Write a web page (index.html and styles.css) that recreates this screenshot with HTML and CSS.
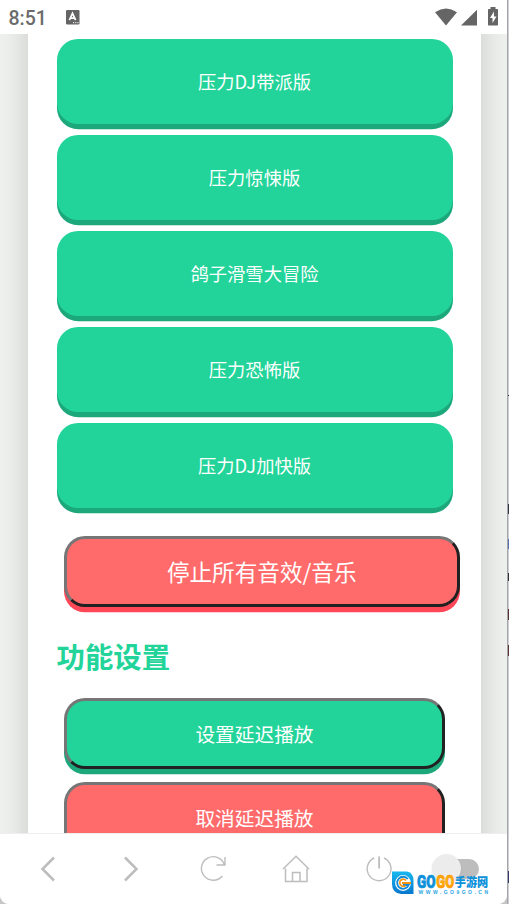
FILE: index.html
```html
<!DOCTYPE html>
<html lang="zh-CN">
<head>
<meta charset="utf-8">
<meta name="viewport" content="width=device-width, initial-scale=1">
<title>音效</title>
<link rel="stylesheet" href="styles.css">
</head>
<body>
<div class="desktop">
  <div class="phone">
    <header class="status">
      <span class="clock">8:51</span>
      <svg class="ime" viewBox="0 0 14 15"><rect width="13.5" height="14.5" rx="1.2" fill="#656565"/><path d="M3.4 10.2 6.5 3.3 9.6 10.2M4.6 8.1h3.8" fill="none" stroke="#fff" stroke-width="1.7"/><path d="M7 12.7h1.2M9.2 12.7h1.2M11.4 12.7h1.2" stroke="#fff"/></svg>
      <svg class="signals" viewBox="0 0 64 20"><path d="M0 5.2Q11 -2 22 5.2L11 18.5Z" fill="#656565"/><path d="M42 2.7V18.5H26Z" fill="#656565"/><path d="M55.5 0h5v2h1.700q.8 0 .8.8v14.900q0 .8-.8.8H53.800q-.8 0-.8-.8V2.800Q53 2 53.800 2h1.700Z" fill="#656565"/><path d="M59 4.500 55 11h2.500v5L61.500 9.500H59Z" fill="#fff"/></svg>
    </header>
    <main class="page">
      <section class="sheet">
        <div class="sounds">
          <div class="sound">压力DJ带派版</div>
          <div class="sound">压力惊悚版</div>
          <div class="sound">鸽子滑雪大冒险</div>
          <div class="sound">压力恐怖版</div>
          <div class="sound">压力DJ加快版</div>
        </div>
        <button class="action stop">停止所有音效/音乐</button>
        <h2>功能设置</h2>
        <button class="action delay">设置延迟播放</button>
        <button class="action cancel">取消延迟播放</button>
      </section>
    </main>
    <nav class="toolbar">
      <svg viewBox="0 0 32 32"><path d="M22 4.500 10.500 16 22 27.500" stroke-width="2.500"/></svg>
      <svg viewBox="0 0 32 32"><path d="M10 4.500 21.500 16 10 27.500" stroke-width="2.500"/></svg>
      <svg viewBox="0 0 32 32"><path d="M25.300 23A11.800 11.800 0 1 1 27.500 12M28 4v8h-8.500" stroke-width="1.400"/></svg>
      <svg viewBox="0 0 32 32"><path d="M3 16 16 3.300 29 16M5.500 15.500v13h21.500v-13M12.500 28.500v-9h7.500v9" stroke-width="1.500"/></svg>
      <svg viewBox="0 0 32 32"><path d="M11.200 5A11.900 11.900 0 1 0 21 5" stroke-width="1.400"/><path d="M16.100 3.500V15.500" stroke-width="1.800"/></svg>
      <div class="switch"><div class="knob"></div></div>
    </nav>
  </div>
  <div class="edge"></div>
</div>
<svg class="mark" viewBox="0 0 98 24">
  <defs>
    <linearGradient id="blue" x2="0" y2="1"><stop offset="0" stop-color="#18b8ef"/><stop offset="1" stop-color="#0877cd"/></linearGradient>
    <linearGradient id="gold" x2="0" y2="1"><stop offset="0" stop-color="#ff9800"/><stop offset=".5" stop-color="#ffb20b"/><stop offset="1" stop-color="#ff8500"/></linearGradient>
  </defs>
  <path d="M0 .5H15Q21.500 2 21.500 9V23H9Q0 22 0 13Z" fill="url(#blue)"/>
  <circle cx="11" cy="12" r="7.900" fill="#fff"/>
  <path d="M15.800 8A6 6 0 1 0 16.700 14H11" fill="none" stroke="#108ad8" stroke-width="1.800"/>
  <path d="M14 9.500A3.500 3.500 0 1 0 13.500 14.500M10 12h9" fill="none" stroke="#f59413" stroke-width="1.800"/>
  <g class="brand"><text x="25" y="16.700" textLength="18.500" lengthAdjust="spacingAndGlyphs" fill="#0c91da" stroke="#0c91da">GO</text><text x="44.300" y="16.700" textLength="18" lengthAdjust="spacingAndGlyphs" fill="url(#gold)" stroke="#ff9b05">GO</text></g>
  <text class="cn" x="62.800" y="15.500" textLength="33.500" lengthAdjust="spacingAndGlyphs" fill="#0c91da">手游网</text>
  <text class="url" x="26.500" y="22.600" textLength="69.500" fill="#28a5df">WWW.GO9GO.CN</text>
</svg>
</body>
</html>
```
FILE: styles.css
```css
* { box-sizing: border-box; }
body { margin: 0; overflow: hidden; font-family: "Noto Sans CJK SC", sans-serif; }
.desktop { display: flex; width: 509px; height: 904px; background: #c6c6c9; }
.phone { display: flex; flex-direction: column; width: 507px; height: 904px; overflow: hidden; background: #fff; border-radius: 0 0 9px 9px; }
.edge {
  width: 2px;
  border-left: 1px solid #a5a5a9;
  background:
    linear-gradient(#303548 0 0) 0 504px / 1px 10px no-repeat,
    linear-gradient(#5273ad 0 0) 0 539px / 1px 10px no-repeat,
    linear-gradient(#333 0 0) 0 573px / 1px 8px no-repeat,
    linear-gradient(#593332 0 0) 0 609px / 1px 11px no-repeat,
    linear-gradient(#593332 0 0) 0 645px / 1px 11px no-repeat,
    linear-gradient(#333 0 0) 0 395px / 1px 1px no-repeat,
    linear-gradient(#333a70 0 0) 0 871px / 1px 12px no-repeat,
    #cfcfd3;
}
.status { display: flex; flex: none; height: 34px; align-items: flex-start; padding: 7px 8px 0 8.500px; background: #fff; }
.clock { width: 57.500px; color: #6b6b6b; font: 500 19.500px/23px Roboto, sans-serif; }
.ime { width: 14px; height: 15px; margin-top: 3px; }
.signals { width: 64px; height: 20px; margin: 0 0 0 auto; }
.page { flex: 1; min-height: 0; overflow: hidden; padding: 0 26px 0 28px; background: #eff1ee; }
.sheet { height: 930px; margin-top: -50px; padding: 55px 28.500px 0; background: #fff; box-shadow: 0 0 28px rgba(0, 0, 0, .17); }
.sounds { display: flex; flex-direction: column; gap: 11.500px; }
.sound { height: 84.500px; border-radius: 21px; background: #22d499; box-shadow: 0 5.200px 0 #1da87c; color: #fff; font-size: 18.300px; line-height: 84px; text-align: center; }
.action { display: block; height: 71px; margin: 0 0 0 7.500px; padding: 0; border: 3px solid; border-color: #767676 #212121 #212121 #767676; border-radius: 21px; color: #fff; font-family: inherit; line-height: 65px; text-align: center; }
.stop { width: 395.500px; margin-top: 28px; background: #ff6b6b; box-shadow: 0 5.300px 0 #ff4757; font-size: 22.600px; }
h2 { margin: 28px 0 22px; color: #22d499; font-size: 28.400px; line-height: 41px; font-weight: 700; }
.delay, .cancel { width: 381px; font-size: 19.700px; }
.delay { background: #22d499; box-shadow: 0 5.300px 0 #1da87c; }
.cancel { margin-top: 13.500px; background: #ff6b6b; box-shadow: 0 5.300px 0 #ff4757; }
.toolbar { position: relative; display: flex; flex: none; height: 71px; align-items: center; gap: 50.700px; padding: 0 27px 0 32px; border-top: 1px solid #eee; background: #fff; }
.toolbar svg { flex: none; width: 32px; height: 32px; fill: none; stroke: #bdbdbd; }
.switch { flex: none; width: 47px; height: 20px; margin-left: -13px; padding-left: 11px; }
.switch::before { content: ""; display: block; width: 36px; height: 20px; border-radius: 10px; background: #bdbdbd; }
.knob { position: relative; top: -25px; left: -11px; width: 29px; height: 29px; border-radius: 50%; background: #ececec; box-shadow: 0 1px 2px rgba(0, 0, 0, .12); }
.mark { position: absolute; left: 391.500px; top: 871px; width: 98px; height: 24px; overflow: visible; }
.brand { font: 900 18.500px Roboto, sans-serif; stroke-width: .7; }
.cn { font: 900 12.500px "Noto Sans CJK SC", sans-serif; }
.url { font: 700 5px "Liberation Sans", sans-serif; }
```
